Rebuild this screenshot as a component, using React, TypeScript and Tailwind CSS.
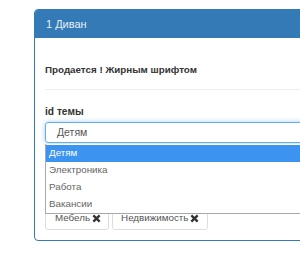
import React from "react";

function XIcon() {
  return (
    <svg width="9" height="9" viewBox="0 0 10 10" className="inline-block">
      <path d="M1.5 1.5 L8.5 8.5 M8.5 1.5 L1.5 8.5" stroke="#333" strokeWidth="2.6" strokeLinecap="butt" />
    </svg>
  );
}

export default function App() {
  const options = ["Детям", "Электроника", "Работа", "Вакансии"];
  return (
    <div
      className="w-[300px] h-[268px] overflow-hidden bg-white relative"
      style={{ fontFamily: '"Liberation Sans", Arial, sans-serif' }}
    >
      <div className="ml-[34px] mt-[9px] w-[300px] border border-[#337ab7] rounded-[4px] bg-white">
        <div className="h-[28px] bg-[#337ab7] flex items-center pl-[11px] text-[11px] text-[#e8f0f8] rounded-t-[3px]">
          1 Диван
        </div>
        <div className="pl-[10px] pb-[10px]">
          <div className="mt-[25px] h-[14px] leading-[14px] text-[9.8px] font-bold text-[#333]">
            Продается ! Жирным шрифтом
          </div>
          <div className="mt-[12px] h-px bg-[#eeeeee]" />
          <div className="mt-[15px] h-[14px] leading-[14px] text-[10.2px] font-bold text-[#333]">
            id темы
          </div>
          <div className="relative mt-[3px]">
            <div className="h-[21px] border border-[#66afe9] rounded-[3px] shadow-[0_0_5px_rgba(102,175,233,0.6)] flex items-center pl-[11px] text-[10.5px] text-[#555]">
              Детям
            </div>
            <div className="absolute left-0 right-0 top-full mt-[1px] border border-[#a9a9a9] border-t-0 bg-white pb-0 z-10">
              {options.map((o, i) => (
                <div
                  key={o}
                  className={
                    "h-[17px] flex items-center pl-[3px] text-[9.8px] " +
                    (i === 0 ? "bg-[#3d94f0] text-white mt-[1px]" : "text-[#666]")
                  }
                >
                  {o}
                </div>
              ))}
            </div>
          </div>
          <div className="mt-[63px] flex gap-[3px]">
            <div className="h-[24px] border border-[#dddddd] rounded-[3px] flex items-center pl-[9px] pr-[7px] gap-[2px] text-[9.8px] text-[#555]">
              Мебель <XIcon />
            </div>
            <div className="h-[24px] border border-[#dddddd] rounded-[3px] flex items-center pl-[8px] pr-[8px] gap-[2px] text-[9.8px] text-[#555]">
              Недвижимость <XIcon />
            </div>
          </div>
        </div>
      </div>
    </div>
  );
}
